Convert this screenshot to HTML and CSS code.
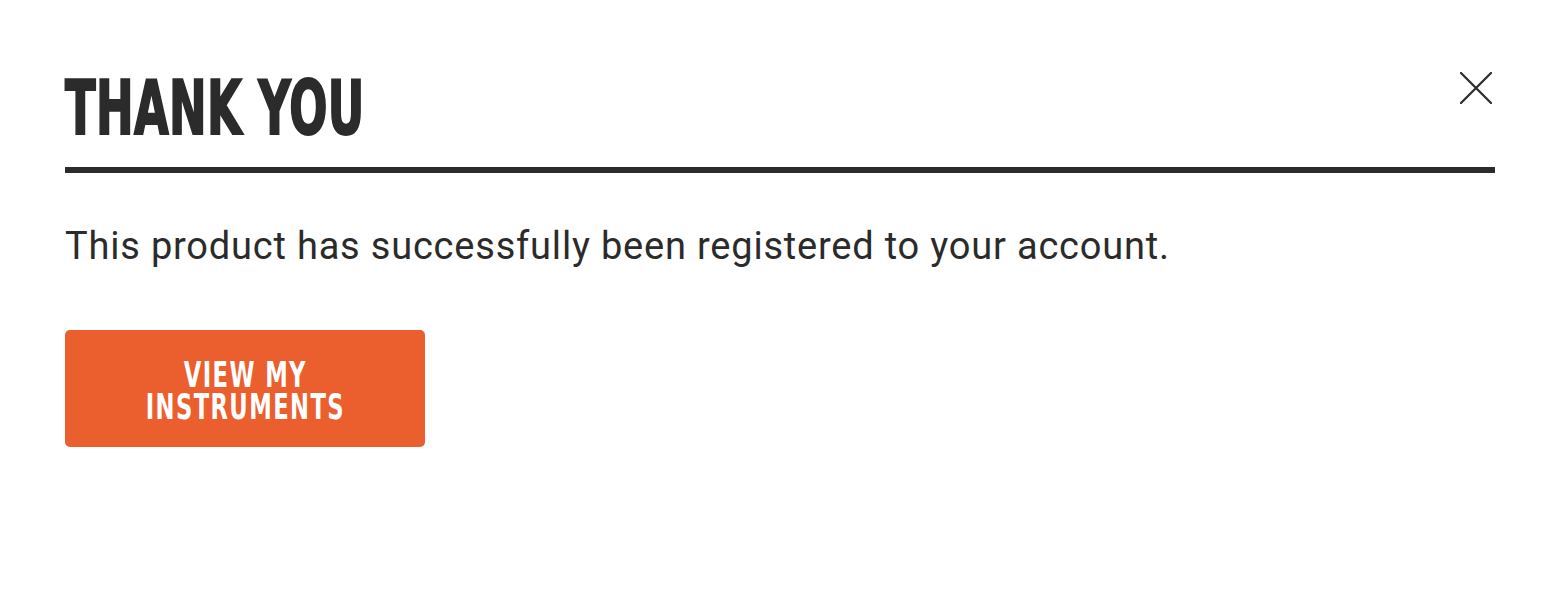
FILE: index.html
```html
<!DOCTYPE html>
<html lang="en">
<head>
<meta charset="utf-8">
<title>Thank you</title>
<link rel="stylesheet" href="styles.css">
</head>
<body>
<div class="modal">
  <div class="modal-header">
    <h1 class="modal-title">THANK YOU</h1>
    <button class="close" aria-label="Close">
      <svg width="32" height="32" viewBox="0 0 32 32"><path d="M1 1L31 31M31 1L1 31" stroke="#2b2b2b" stroke-width="2.2" stroke-linecap="round" fill="none"/></svg>
    </button>
  </div>
  <p class="message">This product has successfully been registered to your account.</p>
  <a class="btn" href="#"><span class="btn-label"><span class="btn-line">VIEW MY</span><span class="btn-line">INSTRUMENTS</span></span></a>
</div>
</body>
</html>
```
FILE: styles.css
```css
html, body { margin: 0; padding: 0; background: #fff; }
.modal { padding: 66px 65px 0 65px; color: #2b2b2b; }
.modal-header {
  display: flex; justify-content: space-between; align-items: flex-start;
  border-bottom: 6px solid #2b2b2b; padding-bottom: 17px;
}
.modal-title {
  margin: 0; font-family: "DejaVu Sans Condensed", "DejaVu Sans", sans-serif;
  font-weight: 700; font-size: 74px; line-height: 84px; color: #2b2b2b;
  white-space: nowrap; letter-spacing: 0.5px;
  transform: scaleX(0.675); transform-origin: left center;
  -webkit-text-stroke: 2px #2b2b2b;
}
.close { background: none; border: 0; padding: 0; margin: 6px 3px 0 0; width: 32px; height: 32px; cursor: pointer; }
.close svg { display: block; }
.message {
  margin: 49px 0 0 0; font-family: Roboto, "Liberation Sans", sans-serif;
  font-size: 38px; line-height: 48px; letter-spacing: 0.8px; color: #2b2b2b;
}
.btn {
  display: flex; align-items: center; justify-content: center; text-align: center;
  margin-top: 60px; width: 360px; height: 117px; box-sizing: border-box; padding-top: 4px;
  background: #eb5e2e; border-radius: 5px; color: #fff; text-decoration: none;
}
.btn-label {
  display: flex; flex-direction: column; align-items: center; white-space: nowrap;
  font-family: "DejaVu Sans Condensed", "DejaVu Sans", sans-serif; font-weight: 700;
  font-size: 36px; line-height: 32px; letter-spacing: 2px;
  transform: scaleX(0.7); transform-origin: center center;
}
.btn-line { display: block; height: 32px; }
```
